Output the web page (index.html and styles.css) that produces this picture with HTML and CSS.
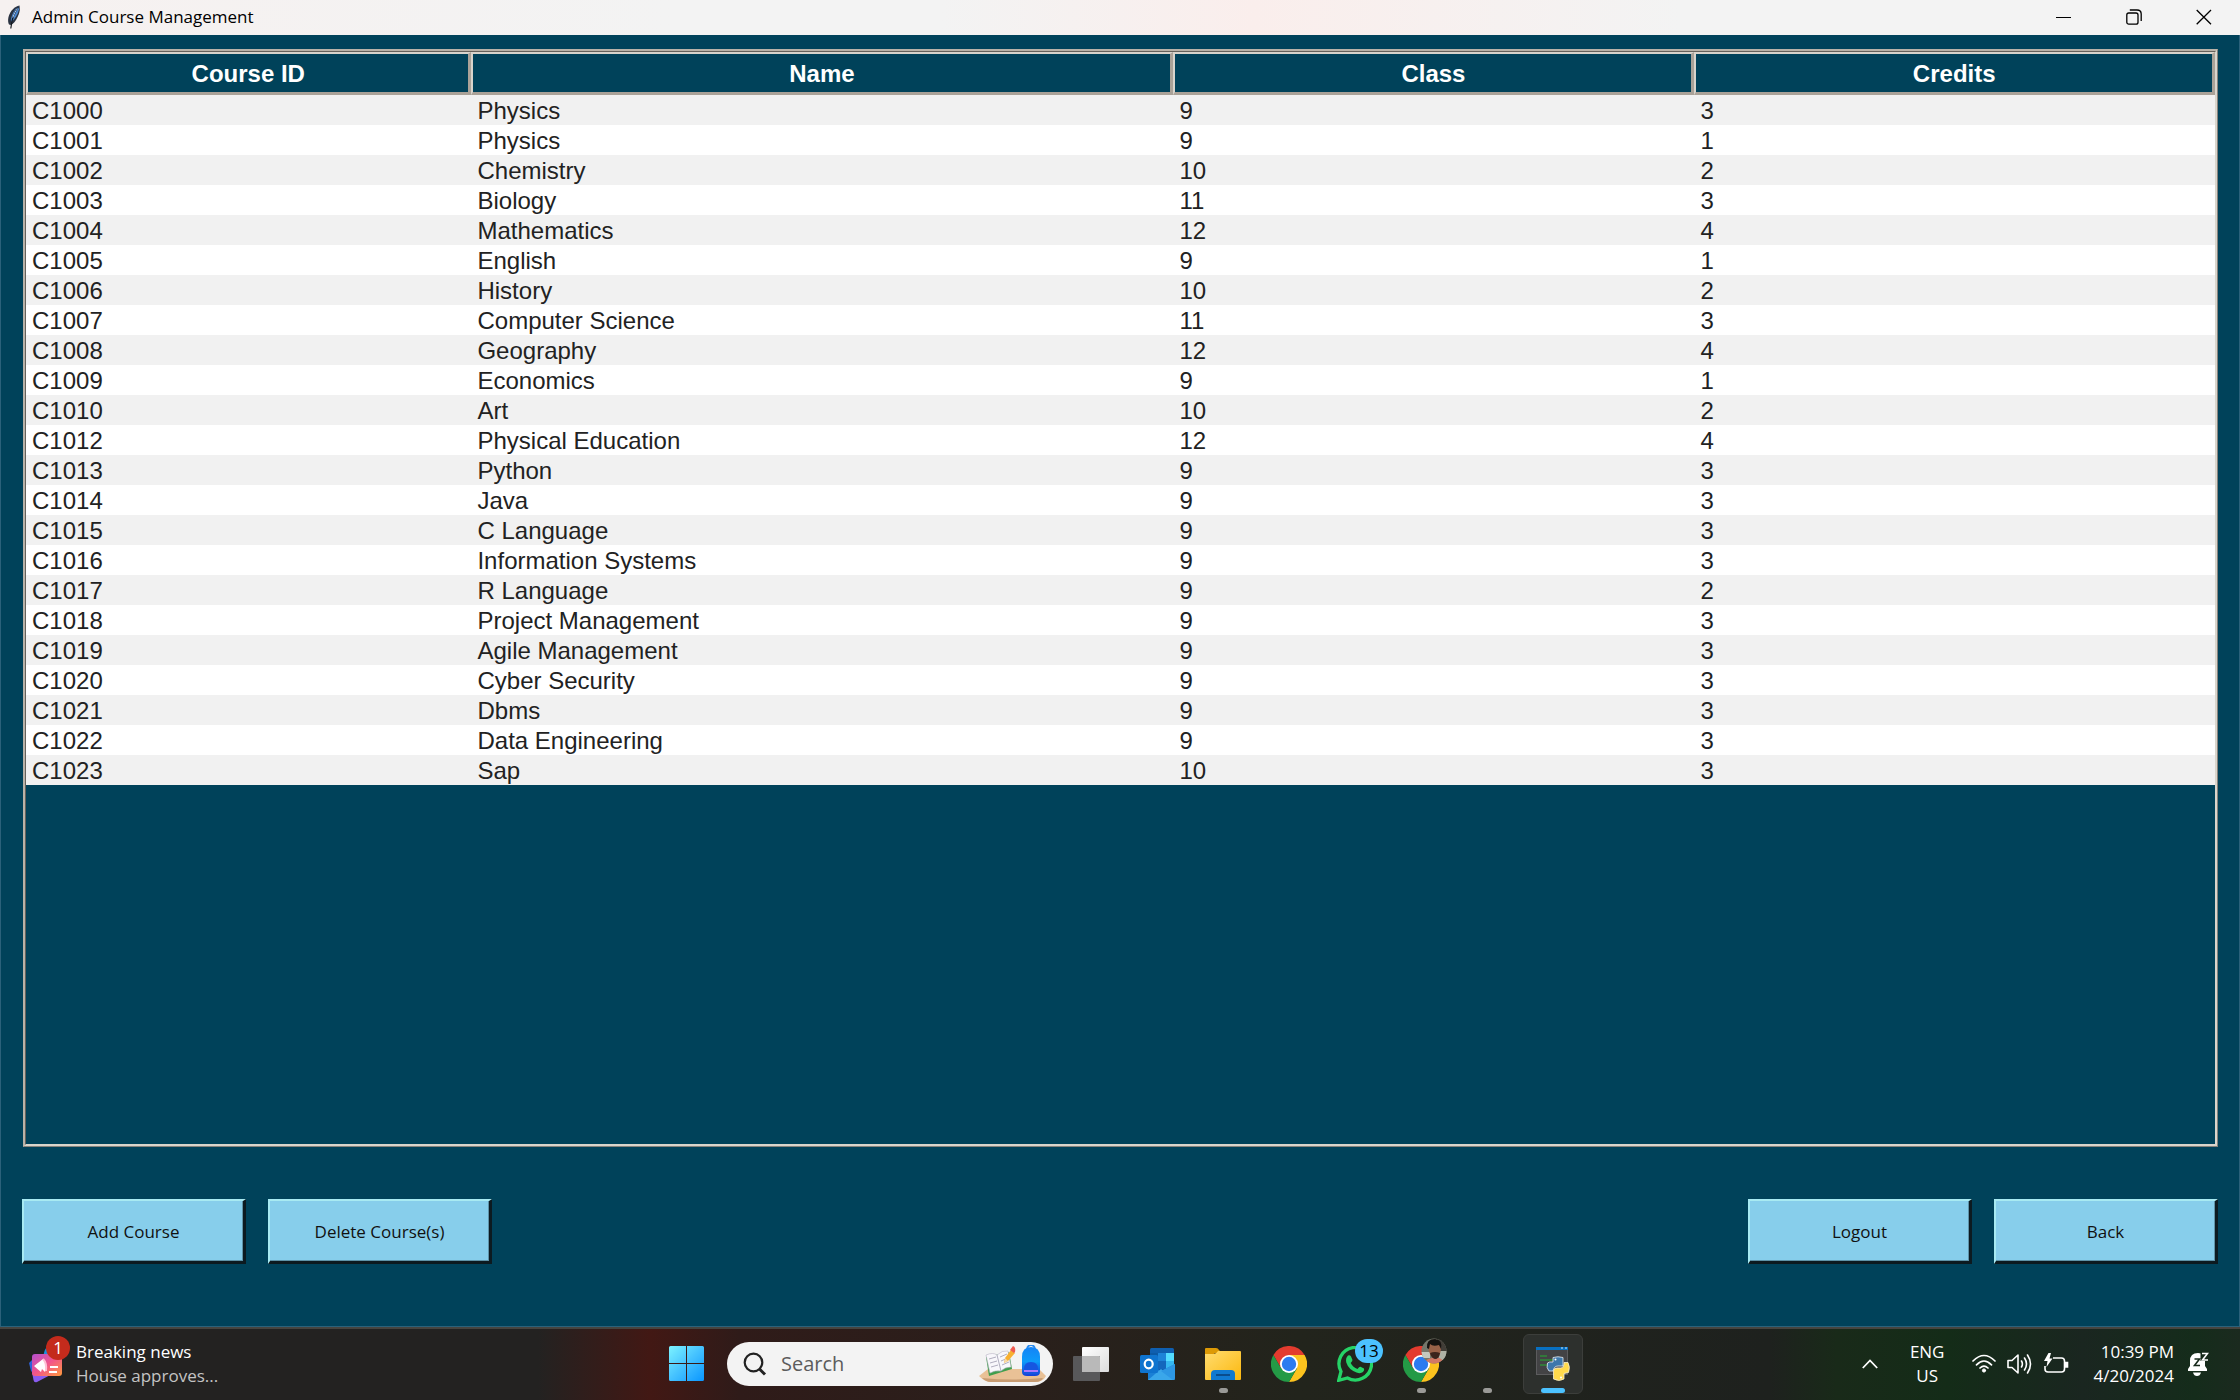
FILE: index.html
```html
<!DOCTYPE html>
<html lang="en">
<head>
<meta charset="utf-8">
<title>Admin Course Management</title>
<link rel="stylesheet" href="styles.css">
</head>
<body>
<header class="titlebar">
  <svg class="feather" width="14" height="24" viewBox="0 0 14 24" aria-hidden="true">
    <path d="M12.500 0.500C8 1 3 6 1.500 12C.8 15 1 18 2 19.500L4 20C8 18 12 11 12.800 5Z" fill="#2a3240"/>
    <path d="M12 1.500C8.500 3 5 8 3.800 15L4.500 17C8 14 11 9 12 4.500Z" fill="#4a86cf"/>
    <path d="M11.500 2C8 6 5 12 3.800 23.500" fill="none" stroke="#16191f" stroke-width="1.200"/>
    <path d="M10.500 3.500C8.500 6 7 9 5.800 12.500" fill="none" stroke="#a9c8ee" stroke-width="1"/>
  </svg>
  <h1 class="title">Admin Course Management</h1>
  <div class="window-buttons">
    <button class="window-button" type="button" aria-label="Minimize"><svg width="16" height="16" viewBox="0 0 16 16"><path d="M0 8.500H15" stroke="#000"/></svg></button>
    <button class="window-button" type="button" aria-label="Restore"><svg width="16" height="16" viewBox="0 0 16 16" fill="none" stroke="#000" stroke-width="1.300"><rect x=".8" y="4" width="11.200" height="11.200" rx="2"/><path d="M3.800 1H11C13.600 1 15.200 2.600 15.200 5V12"/></svg></button>
    <button class="window-button" type="button" aria-label="Close"><svg width="16" height="16" viewBox="0 0 16 16"><path d="M.7 1L15 15.300M15 1L.7 15.300" stroke="#000" stroke-width="1.300"/></svg></button>
  </div>
</header>

<main class="content">
  <div class="table-frame">
    <table class="courses">
      <colgroup><col class="col-id"><col class="col-name"><col class="col-class"><col></colgroup>
      <thead><tr><th scope="col">Course ID</th><th scope="col">Name</th><th scope="col">Class</th><th scope="col">Credits</th></tr></thead>
      <tbody>
        <tr><td>C1000</td><td>Physics</td><td>9</td><td>3</td></tr>
        <tr><td>C1001</td><td>Physics</td><td>9</td><td>1</td></tr>
        <tr><td>C1002</td><td>Chemistry</td><td>10</td><td>2</td></tr>
        <tr><td>C1003</td><td>Biology</td><td>11</td><td>3</td></tr>
        <tr><td>C1004</td><td>Mathematics</td><td>12</td><td>4</td></tr>
        <tr><td>C1005</td><td>English</td><td>9</td><td>1</td></tr>
        <tr><td>C1006</td><td>History</td><td>10</td><td>2</td></tr>
        <tr><td>C1007</td><td>Computer Science</td><td>11</td><td>3</td></tr>
        <tr><td>C1008</td><td>Geography</td><td>12</td><td>4</td></tr>
        <tr><td>C1009</td><td>Economics</td><td>9</td><td>1</td></tr>
        <tr><td>C1010</td><td>Art</td><td>10</td><td>2</td></tr>
        <tr><td>C1012</td><td>Physical Education</td><td>12</td><td>4</td></tr>
        <tr><td>C1013</td><td>Python</td><td>9</td><td>3</td></tr>
        <tr><td>C1014</td><td>Java</td><td>9</td><td>3</td></tr>
        <tr><td>C1015</td><td>C Language</td><td>9</td><td>3</td></tr>
        <tr><td>C1016</td><td>Information Systems</td><td>9</td><td>3</td></tr>
        <tr><td>C1017</td><td>R Language</td><td>9</td><td>2</td></tr>
        <tr><td>C1018</td><td>Project Management</td><td>9</td><td>3</td></tr>
        <tr><td>C1019</td><td>Agile Management</td><td>9</td><td>3</td></tr>
        <tr><td>C1020</td><td>Cyber Security</td><td>9</td><td>3</td></tr>
        <tr><td>C1021</td><td>Dbms</td><td>9</td><td>3</td></tr>
        <tr><td>C1022</td><td>Data Engineering</td><td>9</td><td>3</td></tr>
        <tr><td>C1023</td><td>Sap</td><td>10</td><td>3</td></tr>
      </tbody>
    </table>
  </div>
  <div class="actions">
    <div class="action-group">
      <button class="action" type="button">Add Course</button>
      <button class="action" type="button">Delete Course(s)</button>
    </div>
    <div class="action-group">
      <button class="action" type="button">Logout</button>
      <button class="action" type="button">Back</button>
    </div>
  </div>
</main>

<footer class="taskbar">
  <button class="news" type="button">
    <span class="news-icon">
      <svg width="34" height="38" viewBox="0 0 34 38" aria-hidden="true">
        <defs><linearGradient id="newsCard" x1="0" y1="0" x2="1" y2="1"><stop offset="0" stop-color="#b44fd0"/><stop offset=".5" stop-color="#f2568a"/><stop offset="1" stop-color="#ff9a3c"/></linearGradient></defs>
        <path d="M15 8Q16 2 20 2H26V12H14Z" fill="#1b8fe0"/>
        <path d="M0 18L4 14V28L2 26Z" fill="#2b62d9"/>
        <path d="M3 27H27L8 37Q5 38 4.500 35Z" fill="#8a5cf0"/>
        <rect x="3" y="9" width="30" height="22" rx="3" fill="url(#newsCard)"/>
        <path d="M5 21L14 14Q17 15 17 24L16 27L13 24L12 27L9 24.500Z" fill="#fff"/>
        <path d="M14 14Q18 18 17 26" fill="none" stroke="#ffc1d6" stroke-width="2"/>
        <path d="M21 22H29M20 27H28" stroke="#fff" stroke-width="2"/>
      </svg>
      <span class="news-badge">1</span>
    </span>
    <span class="news-text"><span>Breaking news</span><span class="news-sub">House approves...</span></span>
  </button>

  <nav class="apps" aria-label="Taskbar">
    <button class="app" type="button" aria-label="Start">
      <svg width="36" height="36" viewBox="0 0 36 36"><defs><linearGradient id="win" gradientUnits="userSpaceOnUse" x1="0" y1="0" x2="35" y2="35"><stop offset="0" stop-color="#7df3ff"/><stop offset=".5" stop-color="#45c2ff"/><stop offset="1" stop-color="#0a96ff"/></linearGradient></defs><path d="M1.500 0H17V17H0V1.500Q0 0 1.500 0ZM18 0H33.500Q35 0 35 1.500V17H18ZM0 18H17V35H1.500Q0 35 0 33.500ZM18 18H35V33.500Q35 35 33.500 35H18Z" fill="url(#win)"/></svg>
    </button>
    <label class="search">
      <svg width="24" height="24" viewBox="0 0 24 24" fill="none" stroke="#222" aria-hidden="true"><circle cx="10.500" cy="10.500" r="8.800" stroke-width="2.200"/><path d="M16.500 17L22 22.500" stroke-width="3"/></svg>
      <input class="search-input" type="text" placeholder="Search" aria-label="Search">
      <svg width="68" height="38" viewBox="0 0 68 38" aria-hidden="true">
        <defs><linearGradient id="bag" x1="0" y1="0" x2="0" y2="1"><stop offset="0" stop-color="#1583f5"/><stop offset=".5" stop-color="#0d9bfa"/><stop offset="1" stop-color="#1440d8"/></linearGradient></defs>
        <path d="M0 31L9 24H60L67 31Q64 37 56 37H12Q6 37 0 31Z" fill="#e9c196"/>
        <path d="M3 33Q34 36 64 33Q62 37 56 37H12Q7 37 3 33Z" fill="#c89c72"/>
        <path d="M7 12L30 7L33 24L10 31Z" fill="#3f9e4c"/>
        <path d="M7 10Q14 7 18 10Q23 5 29 6L32 22Q26 22 22 26Q16 25 11 28Z" fill="#f8f7fb" stroke="#b8b4c4" stroke-width=".6"/>
        <path d="M18 10L22 26M10 14L17 12M11 18L18 16M12 22L19 20M21 12L28 9M22 16L29 13M23 20L30 17" stroke="#9d9aae" stroke-width=".8"/>
        <path d="M25 18L26 13L32 5L36 8L29 16Z" fill="#f8b030"/><path d="M31 5L34 1Q37 2 36 7L35 8Z" fill="#ee5a50"/><path d="M25 18L26 13L29 16Z" fill="#f6d7a8"/>
        <path d="M48 4Q49 0 52 0Q55 0 56 4" fill="none" stroke="#2a8cf0" stroke-width="2"/>
        <path d="M43 12Q43 2 52 2Q61 2 61 12V27Q61 31 56 31H48Q43 31 43 27Z" fill="url(#bag)"/>
        <path d="M45 24Q45 17 52 17Q59 17 59 24V27Q59 29 57 29H47Q45 29 45 27Z" fill="#1656e0"/><path d="M45 26H59" stroke="#a878ff" stroke-width="2"/>
      </svg>
    </label>
    <button class="app" type="button" aria-label="Task view">
      <svg width="36" height="36" viewBox="0 0 36 36"><defs><linearGradient id="tv" x1="0" y1="0" x2="1" y2="1"><stop offset="0" stop-color="#fff"/><stop offset="1" stop-color="#dcdcdc"/></linearGradient></defs><rect x="9" y="1" width="27" height="25" rx="1" fill="url(#tv)"/><rect x="0" y="10" width="27" height="25" rx="1" fill="#58585a"/><path d="M9 10H26Q27 10 27 11V26H9Z" fill="#b9b9b9"/></svg>
    </button>
    <button class="app" type="button" aria-label="Outlook">
      <svg width="36" height="34" viewBox="0 0 36 34"><rect x="11" y="1" width="24" height="28" rx="1.500" fill="#0f5fb0"/><path d="M11 6H19V14H11Z" fill="#0c59a4"/><path d="M19 6H27V14H19Z" fill="#1d83d8"/><path d="M27 6H35V14H27Z" fill="#53dcff"/><path d="M19 14H27V22H19Z" fill="#1468bd"/><path d="M27 14H35V22H27Z" fill="#35b8f1"/><path d="M9 17L22 24L36 17V31Q36 33 34 33H9Z" fill="#1a80d6"/><path d="M9 33L22 22L36 33Z" fill="#3aa7ea"/><path d="M36 17L22 24L34 33Q36 33 36 31Z" fill="#2d97e4"/><rect x="1" y="8" width="18" height="18" rx="1.500" fill="#0f74cf"/><ellipse cx="9.700" cy="17" rx="4" ry="4.400" fill="none" stroke="#fff" stroke-width="2.200"/></svg>
    </button>
    <button class="app running" type="button" aria-label="File Explorer">
      <svg width="36" height="34" viewBox="0 0 36 34"><defs><linearGradient id="fold" x1="0" y1="0" x2="1" y2="1"><stop offset="0" stop-color="#ffdc70"/><stop offset="1" stop-color="#fcb80e"/></linearGradient></defs><path d="M0 2Q0 1 1 1H11Q13 1 14 3L17 6H10L8 8H0Z" fill="#dd9a06"/><path d="M0 7H9Q11 7 13 4H35Q36 4 36 5V32Q36 33 35 33H1Q0 33 0 32Z" fill="url(#fold)"/><path d="M6 33V27Q6 23 10 23H26Q30 23 30 27V33Z" fill="#1079d0"/><path d="M11 28H25" stroke="#0a4c8c" stroke-width="2"/></svg>
    </button>
    <button class="app" type="button" aria-label="Chrome">
      <svg width="36" height="36" viewBox="0 0 36 36"><defs><g id="chrome"><path d="M2.400 9A18 18 0 0 1 33.600 9L18 9L10.200 22.500Z" fill="#e33b2e"/><path d="M33.600 9A18 18 0 0 1 18 36L25.800 22.500L18 9Z" fill="#fcc31e"/><path d="M18 36A18 18 0 0 1 2.400 9L10.200 22.500L25.800 22.500Z" fill="#249a46"/><circle cx="18" cy="18" r="9" fill="#fff"/><circle cx="18" cy="18" r="7.200" fill="#2c7bf0"/></g></defs><use href="#chrome"/></svg>
    </button>
    <button class="app" type="button" aria-label="WhatsApp, 13 unread">
      <svg width="36" height="36" viewBox="0 0 36 36"><path d="M1.700 34.300L4 25.500A16.300 16.300 0 1 1 10.500 32Z" fill="none" stroke="#25d366" stroke-width="3.300"/><path d="M11 9.500Q13 8.800 14 10.500L15.500 14Q15.500 15 13.700 17Q16 21.500 20.500 23Q22.500 20.500 23.500 20.800L27 22.500Q27.700 24 26 26Q23.500 28 19.500 26.500Q11.500 23.500 9.300 16.500Q8.300 12 11 9.500Z" fill="#25d366"/></svg>
      <span class="count">13</span>
    </button>
    <button class="app running" type="button" aria-label="Chrome, profile window">
      <svg width="36" height="36" viewBox="0 0 36 36"><use href="#chrome"/></svg>
      <svg class="avatar" width="26" height="26" viewBox="0 0 26 26"><defs><clipPath id="face"><circle cx="13" cy="13" r="12.500"/></clipPath></defs><g clip-path="url(#face)"><rect width="26" height="26" fill="#75776b"/><path d="M16 0H26V14H18Z" fill="#413d37"/><path d="M0 14H9V20H0Z" fill="#c4c8be"/><path d="M18 13H26V22H18Z" fill="#aeb2a5"/><path d="M3 26Q6 19 13 20Q20 18 24 26Z" fill="#d27965"/><path d="M7 9Q8 5 14 5Q20 6 20 11Q19 20 14 21Q8 18 7 9Z" fill="#9a6248"/><path d="M6 10Q5 1 14 1Q22 2 20 11L18 7Q12 9 9 6L8 11Z" fill="#171310"/><path d="M9 15Q14 13 19 15Q18 21 14 21Q10 20 9 15Z" fill="#3b241c"/></g></svg>
    </button>
    <button class="app running" type="button" aria-label="Running app"></button>
    <button class="app active" type="button" aria-label="Python">
      <svg width="34" height="36" viewBox="0 0 34 36"><rect x="0" y="1" width="32" height="28" fill="#5c5c5e"/><rect x="1" y="3" width="30" height="25" fill="#434345"/><rect x="0" y="1" width="32" height="3" fill="#0870c2"/><path d="M25 2H27M29 2H31" stroke="#cfe6f7" stroke-width="1"/><path d="M4 10H11M4 14H17M4 19H14" stroke="#2f8a38" stroke-width="1.400"/><path d="M17 11.500Q22 10 27 11.500V20H22Q18 20 17 25H13Q10 22 11.500 17Q13 15.500 17 16Z" fill="#3d77ab" stroke="#e8edf1" stroke-width=".8"/><path d="M28 16.500H32Q34.500 21 32.500 26.500L28 27.500V33Q23 36 17.500 33V25Q17.500 22 21 22H25Q28 22 28 18Z" fill="#ffd94c" stroke="#f5efd6" stroke-width=".8"/><circle cx="19.500" cy="13.500" r="1" fill="#fff"/><circle cx="25" cy="31.500" r="1" fill="#fff"/></svg>
    </button>
  </nav>

  <div class="tray">
    <button class="tray-button" type="button" aria-label="Show hidden icons"><svg width="16" height="10" viewBox="0 0 16 10"><path d="M.8 9L8 1.500L15.200 9" fill="none" stroke="#fff" stroke-width="1.800"/></svg></button>
    <button class="tray-button language" type="button"><span>ENG</span><span>US</span></button>
    <button class="tray-button status" type="button" aria-label="Network, volume and battery">
      <svg width="24" height="20" viewBox="0 0 24 20" fill="none" stroke="#fff" stroke-width="1.700" stroke-linecap="round"><path d="M1 7Q12-4 23 7M4.500 10.800Q12 3.200 19.500 10.800M8 14Q12 10.200 16 14"/><circle cx="12" cy="16.500" r="1.600" fill="#fff" stroke-width="1"/></svg>
      <svg width="25" height="22" viewBox="0 0 25 22" fill="none" stroke="#fff" stroke-width="1.600" stroke-linecap="round" stroke-linejoin="round"><path d="M1 7.500H5L11 2V20L5 14.500H1Z"/><path d="M14.500 8Q16.300 11 14.500 14M17.500 5Q21.500 11 17.500 17M20.500 2Q26.500 11 20.500 20"/></svg>
      <svg width="26" height="22" viewBox="0 0 26 22" fill="none" stroke="#fff" stroke-width="1.600"><path d="M10 5H18.500Q21.500 5 21.500 8V16Q21.500 19 18.500 19H5Q2 19 2 16V13"/><path d="M22 9.500H24.500V14H22Z" fill="#fff"/><path d="M5.500 0L1 8H4.500L3.500 14L9.500 5.500H6.500L8 0Z" fill="#fff" stroke="none"/></svg>
    </button>
    <button class="tray-button clock" type="button"><span>10:39 PM</span><span>4/20/2024</span></button>
    <button class="tray-button" type="button" aria-label="Notifications, do not disturb"><svg width="22" height="24" viewBox="0 0 22 24"><path d="M1 19V17L3 14V9Q3 1 11 1Q18 1 18 9V14L20 17V19Z" fill="#fff"/><path d="M6 20.500H14Q13 24 10 24Q7 24 6 20.500Z" fill="#fff"/><path d="M13.500 0H22V9H13.500Z" fill="#172a1b"/><path d="M7.500 7H12.500L7.500 13.500H13" fill="none" stroke="#172a1b" stroke-width="1.600"/><path d="M15 1.500H20.500L15.500 8H21" fill="none" stroke="#fff" stroke-width="1.600"/></svg></button>
  </div>
</footer>
</body>
</html>
```
FILE: styles.css
```css
* { box-sizing: border-box; }

body {
  margin: 0;
  min-height: 100vh;
  display: flex;
  flex-direction: column;
  background: #00425a;
  font-family: "Open Sans", "Noto Sans", sans-serif;
  font-size: 17px;
}

button {
  margin: 0;
  padding: 0;
  border: 0;
  background: none;
  color: inherit;
  font: inherit;
}

svg { display: block; flex: none; }

/* Window title bar */
.titlebar {
  display: flex;
  align-items: center;
  height: 35px;
  padding: 0 1px 2px 7px;
  background: linear-gradient(90deg, #f6f1f0, #f3f3f3 30%, #f3f3f3 42%, #faeeec 56%, #f3f3f3 75%);
}

.title {
  flex: 1;
  margin: 0 0 0 11px;
  color: #000;
  font-size: 17px;
  font-weight: 400;
  line-height: 24px;
}

.window-buttons { display: flex; }

.window-button {
  display: grid;
  place-items: center;
  width: 70px;
  height: 33px;
}

/* Course table */
.content {
  flex: 1;
  display: flex;
  flex-direction: column;
  padding: 14px 21px 62px;
  border: solid #2b617a;
  border-width: 0 1px 1px;
}

.table-frame {
  flex: 1;
  margin-left: 1px;
  border: 3px ridge #d9d5cc;
  border-color: #b9b2a8 #d9d5cc #d9d5cc #b9b2a8;
}

.courses {
  width: 100%;
  table-layout: fixed;
  border-collapse: separate;
  border-spacing: 0;
  font-family: "Liberation Sans", Arial, sans-serif;
  font-size: 24px;
  line-height: 29px;
}

.col-id { width: 20.35%; }
.col-name { width: 32.07%; }
.col-class { width: 23.8%; }

.courses th {
  height: 43px;
  padding: 0;
  border: solid;
  border-width: 2px 3px 3px 2px;
  border-color: #d8d4cc #aaa298 #aaa298 #d8d4cc;
  background: #00425a;
  color: #fff;
  font-weight: 700;
}

.courses td {
  height: 30px;
  padding: 1px 5px 0 6px;
  color: #222;
}

.courses tbody tr { background: #fff; }
.courses tbody tr:nth-child(odd) { background: #f1f1f1; }

/* Action buttons */
.actions {
  display: flex;
  justify-content: space-between;
  margin-top: 52px;
}

.action-group { display: flex; gap: 22px; }

.action {
  width: 224px;
  height: 65px;
  border: solid;
  border-width: 2px 3px 3px 2px;
  border-color: #a8eaf2 #0c1a20 #0c1a20 #a8eaf2;
  background: #87ceeb;
  box-shadow: inset -1px -1px #5e93a8;
  color: #111;
}

/* Taskbar */
.taskbar {
  display: grid;
  grid-template-columns: 1fr auto 1fr;
  align-items: center;
  height: 73px;
  padding-bottom: 2px;
  border-top: 2px solid #46443f;
  background: linear-gradient(90deg, #232221 0, #232221 24%, #421814 29%, #2f1b19 33%, #2a1f1b 45%, #22241c 58%, #1e211e 79%, #192a19 82%, #142c18 87%, #1a2620 93%, #152c1b 98%, #1b2a1f);
  color: #fff;
  line-height: 24px;
}

.news {
  display: flex;
  align-items: center;
  gap: 13px;
  padding-left: 29px;
  text-align: left;
}

.news-icon { position: relative; }

.news-badge {
  position: absolute;
  top: -9px;
  right: -7px;
  width: 24px;
  height: 24px;
  border-radius: 50%;
  background: #c42b1c;
  text-align: center;
}

.news-text { display: flex; flex-direction: column; }
.news-sub { color: #c4c4c4; }

.apps { display: flex; align-items: center; gap: 6px; }

.app {
  position: relative;
  display: grid;
  place-items: center;
  width: 60px;
  height: 60px;
  border-radius: 6px;
}

.running::after,
.active::after {
  content: "";
  position: absolute;
  bottom: 1px;
  left: 50%;
  width: 9px;
  height: 5px;
  margin-left: -4px;
  border-radius: 3px;
  background: #9a9a97;
}

.active {
  border: 1px solid #3c3e3b;
  background: #2d302d;
}

.active::after {
  bottom: 0;
  width: 24px;
  margin-left: -12px;
  background: #4cc2ff;
}

.count {
  position: absolute;
  top: 5px;
  left: 30px;
  width: 28px;
  height: 24px;
  border-radius: 12px;
  background: #4cc2ff;
  color: #000;
  text-align: center;
}

.avatar { position: absolute; top: 4px; left: 30px; }

.search {
  display: flex;
  align-items: center;
  width: 326px;
  height: 44px;
  margin: 0 2px 0 4px;
  padding: 0 6px 0 16px;
  border-radius: 22px;
  background: #f3f3f3;
}

.search-input {
  flex: 1;
  min-width: 0;
  margin-left: 14px;
  padding: 0;
  border: 0;
  outline: 0;
  background: none;
  color: #222;
  font: inherit;
  font-size: 20px;
}

.search-input::placeholder { color: #5c5c5c; opacity: 1; }

.tray {
  display: flex;
  align-items: center;
  justify-content: flex-end;
  padding-right: 31px;
}

.language {
  display: flex;
  flex-direction: column;
  margin-left: 32px;
}

.status { display: flex; align-items: center; gap: 11px; margin: 0 24px 0 28px; }

.clock {
  display: flex;
  flex-direction: column;
  margin-right: 13px;
  text-align: right;
}
```
